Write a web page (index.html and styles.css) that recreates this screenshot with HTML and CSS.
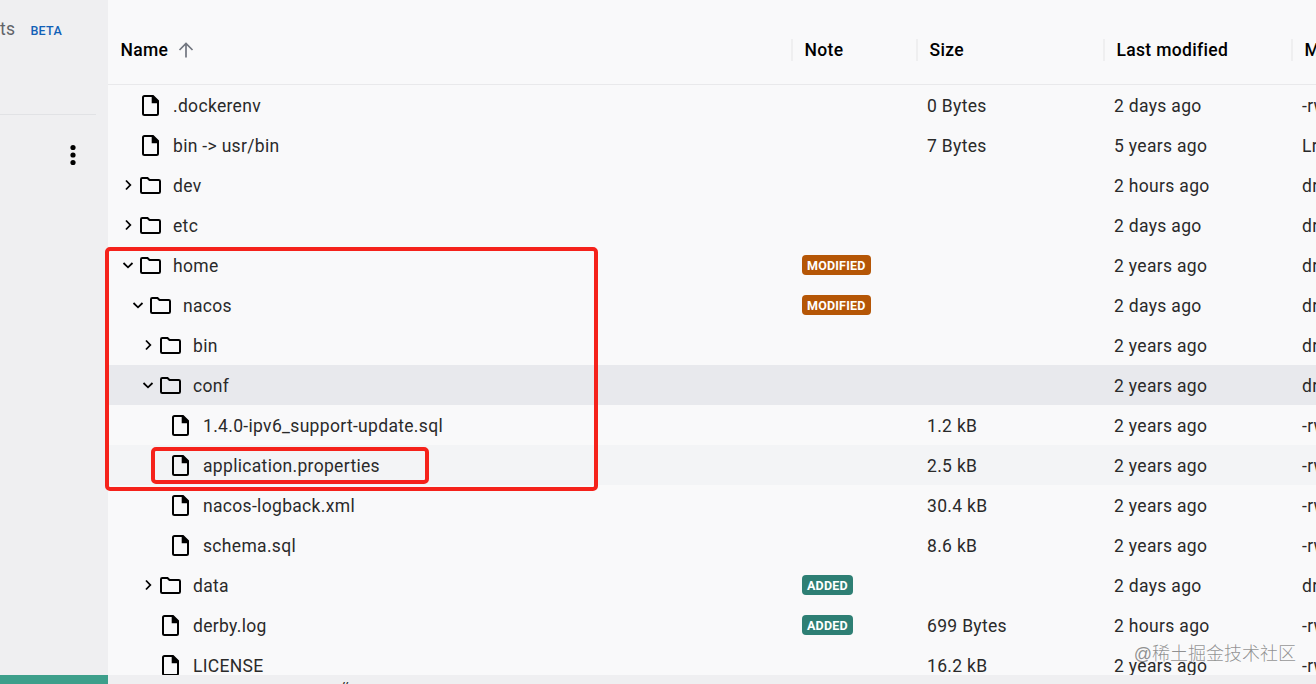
FILE: index.html
```
<!DOCTYPE html>
<html lang="en">
<head>
    <meta charset="UTF-8">
    <meta name="viewport" content="width=device-width, initial-scale=1.0">
    <title>Container files</title>
    <link rel="stylesheet" href="styles.css">
</head>
<body>
    <svg class="sprite">
        <symbol id="file" viewBox="0 0 24 24"><path d="M14 3H5.5Q4 3 4 4.500V20.500Q4 22 5.500 22H17.500Q19 22 19 20.500V8Z" fill="none" stroke="#000" stroke-width="2"/><path d="M12.700 3h1.800l5 5v2.200H12.700z"/></symbol>
        <symbol id="folder" viewBox="0 0 24 24"><path d="M2 6.300Q2 5 3.300 5H8.500L10.500 7H19.700Q21 7 21 8.300V18.700Q21 20 19.700 20H3.300Q2 20 2 18.700Z" fill="none" stroke="#000" stroke-width="2"/></symbol>
        <symbol id="right" viewBox="0 0 16 16"><path d="M6 3.500L10.300 8L6 12.500" fill="none" stroke="#000" stroke-width="1.800"/></symbol>
        <symbol id="down" viewBox="0 0 16 16"><path d="M3.500 6L8 10.300L12.500 6" fill="none" stroke="#000" stroke-width="1.800"/></symbol>
    </svg>
    <div class="app">
        <div class="sidebar">
            <div class="side-top">
                <span>ts</span>
                <span class="beta">BETA</span>
            </div>
            <div class="side-menu">
                <svg width="6" height="22" viewBox="0 0 6 22"><circle cx="3" cy="3.500" r="2.600"/><circle cx="3" cy="11" r="2.600"/><circle cx="3" cy="18.500" r="2.600"/></svg>
            </div>
            <div class="side-status"></div>
        </div>
        <div class="main">
            <div class="head grid">
                <div class="th">Name
                    <svg class="sort" width="16" height="16" viewBox="0 0 16 16"><path d="M8 15.500V2M1.500 8L8 1.500L14.500 8" fill="none" stroke="#71757f" stroke-width="1.700"/></svg>
                </div>
                <div class="th">Note</div>
                <div class="th">Size</div>
                <div class="th">Last modified</div>
                <div class="th">Mode</div>
            </div>
            <div class="rows" id="rows"></div>
            <div class="footer"><span>#</span></div>
        </div>
    </div>
    <div class="mark mark-home"></div>
    <div class="mark mark-file"></div>
    <div class="watermark">@稀土掘金技术社区</div>

    <script src="script.js"></script>
</body>
</html>
```
FILE: styles.css
```
* {
    box-sizing: border-box;
}
body {
    margin: 0;
    height: 684px;
    overflow: hidden;
    position: relative;
    font-family: Roboto, "Liberation Sans", sans-serif;
    font-size: 17.5px;
    letter-spacing: 0.32px;
    color: #2a2a2a;
    background: #f9f9fa;
}
.sprite {
    display: none;
}
svg {
    flex: none;
}
.app {
    display: flex;
    height: 684px;
    overflow: hidden;
}
.sidebar {
    width: 108px;
    flex: none;
    display: flex;
    flex-direction: column;
    background: #efeff1;
}
.side-top {
    height: 115px;
    width: 96px;
    padding-top: 19px;
    border-bottom: 1px solid #e1e2e5;
    display: flex;
    align-items: flex-start;
    line-height: 20px;
    color: #5f6368;
}
.side-top .beta {
    margin-left: 15px;
    padding-top: 2px;
    font-size: 12.5px;
    font-weight: 500;
    color: #1160b7;
}
.side-menu {
    flex: 1;
    padding: 29px 0 0 70px;
}
.side-status {
    height: 9px;
    background: #3d9f8b;
}
.main {
    flex: 1;
    min-width: 0;
    overflow: hidden;
    display: flex;
    flex-direction: column;
}
.grid {
    display: grid;
    grid-template-columns: 684px 125px 187px 188px 188px;
}
.head {
    height: 85px;
    padding-top: 15px;
    border-bottom: 1px solid #e9e9eb;
    align-items: center;
    color: #000;
    font-weight: 500;
}
.th {
    height: 22px;
    padding-left: 11.5px;
    display: flex;
    align-items: center;
    border-left: 2px solid #efeff0;
    margin-left: -1px;
}
.th:first-child {
    padding-left: 12.5px;
    border-left: 0;
    margin-left: 0;
}
.sort {
    margin-left: 9.5px;
}
.rows {
    flex: 1;
    min-height: 0;
    overflow: hidden;
}
.row {
    height: 40px;
    line-height: 42px;
    white-space: nowrap;
}
.row.selected {
    background: #e8e9ed;
}
.row.hover {
    background: #f3f4f6;
}
.row > div {
    height: 40px;
    padding-left: 10px;
}
.row > .name {
    display: flex;
    align-items: center;
    padding-left: 12px;
}
.level1 > .name {
    padding-left: 22px;
}
.level2 > .name {
    padding-left: 32px;
}
.level3 > .name {
    padding-left: 42px;
}
.name span {
    height: 40px;
}
.arrow {
    width: 16px;
    height: 16px;
    margin-right: 3px;
}
.icon {
    width: 24px;
    height: 24px;
    margin-right: 10px;
}
.badge {
    display: block;
    width: fit-content;
    height: 20px;
    margin-top: 10px;
    padding: 0 5px;
    border-radius: 4px;
    line-height: 21px;
    font-size: 12.5px;
    font-weight: 700;
    letter-spacing: 0.19px;
    color: #fff;
}
.modified {
    background: #b55606;
}
.added {
    background: #2e7f74;
}
.footer {
    height: 9px;
    overflow: hidden;
    background: #efeff1;
}
.footer span {
    display: block;
    padding: 3px 0 0 230px;
    font-size: 17px;
    font-style: italic;
}
.mark {
    position: absolute;
    border: 4px solid #f5221b;
    border-radius: 5px;
}
.mark-home {
    left: 105px;
    top: 247px;
    width: 493px;
    height: 244px;
}
.mark-file {
    left: 151px;
    top: 447px;
    width: 278px;
    height: 37px;
}
.watermark {
    position: absolute;
    right: 20px;
    bottom: 17px;
    font-family: "Liberation Sans", "Noto Sans CJK SC", sans-serif;
    font-size: 18px;
    font-weight: 300;
    line-height: 26px;
    letter-spacing: 0;
    color: rgba(110, 110, 110, 0.75);
}
```
FILE: script.js
```
// level, type, name, note, size, last modified, mode, row state
const files = [
    [0, 'file', '.dockerenv', '', '0 Bytes', '2 days ago', '-rwxr-xr-x'],
    [0, 'file', 'bin -> usr/bin', '', '7 Bytes', '5 years ago', 'Lrwxrwxrwx'],
    [0, 'right', 'dev', '', '', '2 hours ago', 'drwxr-xr-x'],
    [0, 'right', 'etc', '', '', '2 days ago', 'drwxr-xr-x'],
    [0, 'down', 'home', 'modified', '', '2 years ago', 'drwxr-xr-x'],
    [1, 'down', 'nacos', 'modified', '', '2 days ago', 'drwxr-xr-x'],
    [2, 'right', 'bin', '', '', '2 years ago', 'drwxr-xr-x'],
    [2, 'down', 'conf', '', '', '2 years ago', 'drwxr-xr-x', 'selected'],
    [3, 'file', '1.4.0-ipv6_support-update.sql', '', '1.2 kB', '2 years ago', '-rw-r--r--'],
    [3, 'file', 'application.properties', '', '2.5 kB', '2 years ago', '-rw-r--r--', 'hover'],
    [3, 'file', 'nacos-logback.xml', '', '30.4 kB', '2 years ago', '-rw-r--r--'],
    [3, 'file', 'schema.sql', '', '8.6 kB', '2 years ago', '-rw-r--r--'],
    [2, 'right', 'data', 'added', '', '2 days ago', 'drwxr-xr-x'],
    [2, 'file', 'derby.log', 'added', '699 Bytes', '2 hours ago', '-rw-r--r--'],
    [2, 'file', 'LICENSE', '', '16.2 kB', '2 years ago', '-rw-r--r--']
];

document.getElementById('rows').innerHTML = files.map(([level, type, name, note, size, date, mode, state]) => {
    const arrow = type === 'file' ? '' : `<use href="#${type}"/>`;
    const icon = type === 'file' ? 'file' : 'folder';
    return `<div class="row grid level${level} ${state || ''}">
        <div class="name"><svg class="arrow">${arrow}</svg><svg class="icon"><use href="#${icon}"/></svg><span>${name.replace('>', '&gt;')}</span></div>
        <div>${note ? `<span class="badge ${note}">${note.toUpperCase()}</span>` : ''}</div>
        <div>${size}</div>
        <div>${date}</div>
        <div>${mode}</div>
    </div>`;
}).join('');
```
